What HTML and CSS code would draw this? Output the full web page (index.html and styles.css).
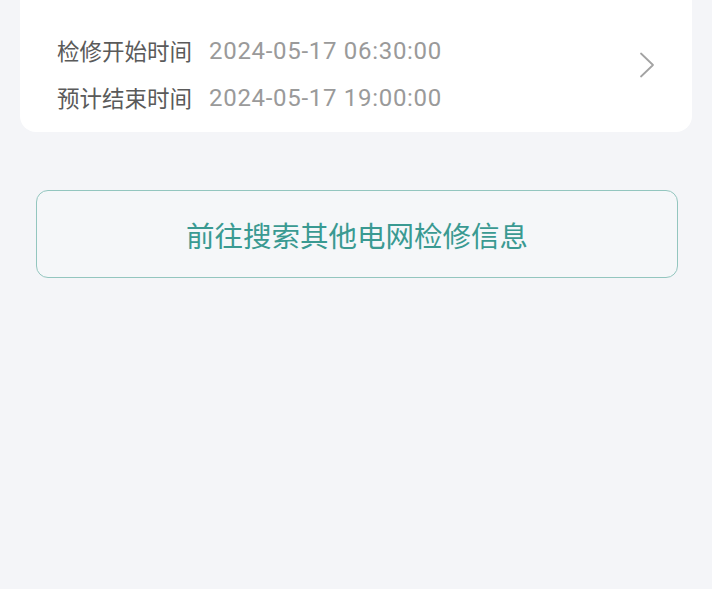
FILE: index.html
```html
<!DOCTYPE html>
<html lang="zh">
<head>
<meta charset="utf-8">
<link rel="stylesheet" href="styles.css">
</head>
<body>
<div class="page">
  <div class="card">
    <div class="rows">
      <div class="row"><span class="label">检修开始时间</span><span class="value">2024-05-17 06:30:00</span></div>
      <div class="row"><span class="label">预计结束时间</span><span class="value">2024-05-17 19:00:00</span></div>
    </div>
    <svg class="chev" width="16" height="26" viewBox="0 0 16 26"><path d="M2 1.5 L14 13 L2 24.5" fill="none" stroke="#a3a3a3" stroke-width="1.8" stroke-linecap="round" stroke-linejoin="round"/></svg>
  </div>
  <div class="btn-wrap">
    <div class="btn">前往搜索其他电网检修信息</div>
  </div>
</div>
</body>
</html>
```
FILE: styles.css
```css
html, body {
  margin: 0;
  padding: 0;
  background: #f4f5f8;
}
body {
  font-family: "Noto Sans CJK SC", "Noto Sans", sans-serif;
  width: 712px;
  height: 589px;
  overflow: hidden;
}
.page {
  padding: 0 20px;
}
.card {
  background: #ffffff;
  border-radius: 0 0 16px 16px;
  display: flex;
  justify-content: space-between;
  padding: 27px 36px 11px 37px;
}
.rows {
  display: flex;
  flex-direction: column;
}
.row {
  display: flex;
  align-items: center;
  height: 47px;
  gap: 17px;
}
.label {
  font-size: 22.5px;
  color: #5a5a5a;
  position: relative;
  top: -1px;
}
.value {
  font-family: "Roboto", "Noto Sans", sans-serif;
  font-size: 24px;
  letter-spacing: 0.7px;
  color: #9a9a9a;
}
.chev {
  margin-top: 25px;
  margin-right: 1px;
}
.btn-wrap {
  padding: 58px 14px 0 16px;
}
.btn {
  height: 86px;
  border: 1px solid #93c6bf;
  border-radius: 12px;
  background: #f5f7f9;
  display: flex;
  align-items: center;
  justify-content: center;
  font-size: 28.5px;
  color: #3a9a92;
}
```
